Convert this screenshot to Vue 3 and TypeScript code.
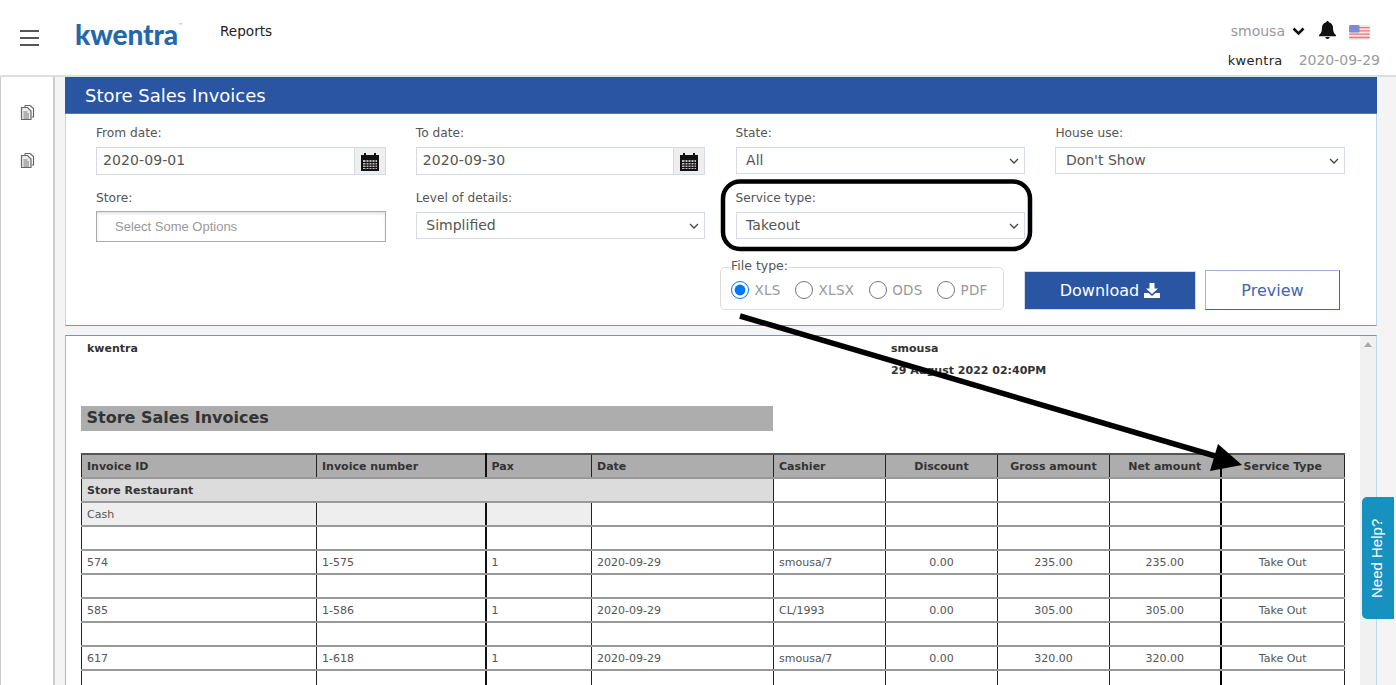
<script setup lang="ts">
interface Row { id: string; num: string; pax: string; date: string; cashier: string; disc: string; gross: string; net: string; type: string }
const rows: Row[] = [
  { id: '574', num: '1-575', pax: '1', date: '2020-09-29', cashier: 'smousa/7', disc: '0.00', gross: '235.00', net: '235.00', type: 'Take Out' },
  { id: '585', num: '1-586', pax: '1', date: '2020-09-29', cashier: 'CL/1993', disc: '0.00', gross: '305.00', net: '305.00', type: 'Take Out' },
  { id: '617', num: '1-618', pax: '1', date: '2020-09-29', cashier: 'smousa/7', disc: '0.00', gross: '320.00', net: '320.00', type: 'Take Out' }
]
const cols = [235, 169, 106, 182, 112, 112, 112, 111, 124]
const fileTypes = ['XLS', 'XLSX', 'ODS', 'PDF']
</script>

<template>
  <div class="page">
    <header class="top">
      <button class="burger" aria-label="Menu"><span></span><span></span><span></span></button>
      <div class="logo">kwentra<sup>™</sup></div>
      <div class="crumb">Reports</div>
      <div class="user">
        <div class="user-line">
          <span class="uname">smousa</span>
          <svg class="chev" width="13" height="9" viewBox="0 0 13 9"><path d="M1.5 1.5 6.5 6.5 11.5 1.5" fill="none" stroke="#111" stroke-width="2.6"/></svg>
          <svg class="bell" width="17" height="18" viewBox="0 0 17 18"><path d="M8.5 0c-.8 0-1.3.6-1.3 1.3C4.6 1.9 3 4 3 6.6c0 4.4-1.2 6-3 7.6v1h17v-1c-1.800-1.600-3-3.200-3-7.600 0-2.600-1.600-4.700-4.200-5.300C9.800.6 9.300 0 8.500 0zM6.300 16c.1 1.200 1 2 2.200 2s2.100-.8 2.200-2z" fill="#111"/></svg>
          <svg class="flag" width="21" height="15" viewBox="0 0 22 16">
            <rect width="22" height="16" rx="2" fill="#f6e6e6"/>
            <path d="M0 2h22v1.500H0zM0 5.500h22V7H0zM0 9h22v1.500H0zM0 12.500h22V14H0z" fill="#e2747c"/>
            <rect width="11" height="8" rx="1" fill="#7f8bcf"/>
          </svg>
        </div>
        <div class="user-line second">
          <span class="org">kwentra</span>
          <span class="today">2020-09-29</span>
        </div>
      </div>
    </header>

    <div class="body">
      <aside class="side">
        <svg v-for="n in 2" :key="n" class="doc" width="16" height="17" viewBox="0 0 16 17">
          <path d="M5 1.500h5l3.500 3v8.500H12M5 1.500V3" fill="none" stroke="#666" stroke-width="1.200"/>
          <path d="M1.500 3.500h6l3.500 3.500v8.500h-9.500z" fill="#ececec" stroke="#666" stroke-width="1.200"/>
          <path d="M3.500 8h4M3.500 10h5.500M3.500 12h5.500M3.500 14h5.500" stroke="#777" stroke-width="1"/>
        </svg>
      </aside>

      <main class="main">
        <section class="filters">
          <h1 class="title">Store Sales Invoices</h1>
          <div class="form">
            <div class="grid">
              <div class="field">
                <label>From date:</label>
                <div class="date">
                  <input value="2020-09-01" />
                  <span class="cal"><svg width="20" height="19" viewBox="0 0 20 19"><path d="M1 3h3V1h2v2h8V1h2v2h3v16H1z" fill="#111"/><path d="M3 8h14v9H3z" fill="#bbb"/><path d="M6 8v9M9 8v9M12 8v9M15 8v9M3 10.500h14M3 13h14M3 15.500h14" stroke="#111" stroke-width="1"/></svg></span>
                </div>
              </div>
              <div class="field">
                <label>To date:</label>
                <div class="date">
                  <input value="2020-09-30" />
                  <span class="cal"><svg width="20" height="19" viewBox="0 0 20 19"><path d="M1 3h3V1h2v2h8V1h2v2h3v16H1z" fill="#111"/><path d="M3 8h14v9H3z" fill="#bbb"/><path d="M6 8v9M9 8v9M12 8v9M15 8v9M3 10.500h14M3 13h14M3 15.500h14" stroke="#111" stroke-width="1"/></svg></span>
                </div>
              </div>
              <div class="field">
                <label>State:</label>
                <select><option>All</option></select>
              </div>
              <div class="field">
                <label>House use:</label>
                <select><option>Don't Show</option></select>
              </div>
              <div class="field">
                <label>Store:</label>
                <div class="chosen">Select Some Options</div>
              </div>
              <div class="field">
                <label>Level of details:</label>
                <select><option>Simplified</option></select>
              </div>
              <div class="field">
                <label>Service type:</label>
                <select><option>Takeout</option></select>
              </div>
            </div>
            <div class="actions">
              <fieldset class="files">
                <legend>File type:</legend>
                <label v-for="(f, i) in fileTypes" :key="f" class="radio">
                  <input type="radio" name="ft" :checked="i === 0" />
                  <span>{{ f }}</span>
                </label>
              </fieldset>
              <button class="btn primary">Download
                <svg width="16" height="15" viewBox="0 0 16 15"><path d="M5.500 0h5v5.500H14L8 11 2 5.500h3.500z" fill="#fff"/><path d="M0 10h4.500L8 13l3.500-3H16v5H0z" fill="#fff"/></svg>
              </button>
              <button class="btn ghost">Preview</button>
            </div>
          </div>
        </section>

        <section class="report">
          <div class="sheet">
            <div class="meta">
              <div class="meta-org">kwentra</div>
              <div class="meta-user">
                <div>smousa</div>
                <div class="stamp">29 August 2022 02:40PM</div>
              </div>
            </div>
            <h2 class="sheet-title">Store Sales Invoices</h2>
            <table>
              <colgroup><col v-for="(c, i) in cols" :key="i" :style="{ width: c + 'px' }" /></colgroup>
              <thead>
                <tr>
                  <th class="l">Invoice ID</th><th class="l heavy">Invoice number</th><th class="l">Pax</th><th class="l">Date</th><th class="l">Cashier</th>
                  <th>Discount</th><th>Gross amount</th><th class="black">Net amount</th><th>Service Type</th>
                </tr>
              </thead>
              <tbody>
                <tr>
                  <td colspan="4" class="l shade1"><b>Store Restaurant</b></td>
                  <td></td><td></td><td></td><td class="black"></td><td></td>
                </tr>
                <tr>
                  <td class="l shade2">Cash</td><td class="shade2 heavy"></td><td class="shade2"></td>
                  <td></td><td></td><td></td><td></td><td class="black"></td><td></td>
                </tr>
                <tr><td></td><td class="heavy"></td><td></td><td></td><td></td><td></td><td></td><td class="black"></td><td></td></tr>
                <template v-for="r in rows" :key="r.id">
                  <tr>
                    <td class="l">{{ r.id }}</td><td class="l heavy">{{ r.num }}</td><td class="l">{{ r.pax }}</td><td class="l">{{ r.date }}</td><td class="l">{{ r.cashier }}</td>
                    <td>{{ r.disc }}</td><td>{{ r.gross }}</td><td class="black">{{ r.net }}</td><td>{{ r.type }}</td>
                  </tr>
                  <tr><td></td><td class="heavy"></td><td></td><td></td><td></td><td></td><td></td><td class="black"></td><td></td></tr>
                </template>
              </tbody>
            </table>
          </div>
          <div class="scroll"><i></i></div>
        </section>
      </main>
    </div>

    <a class="help">Need Help?</a>

    <svg class="marks" width="1396" height="685" viewBox="0 0 1396 685">
      <rect x="723" y="181.500" width="307" height="67.500" rx="17" fill="none" stroke="#000" stroke-width="4.500"/>
      <path d="M740 316 1222 458" stroke="#000" stroke-width="5.500" fill="none"/>
      <path d="M1218 444 1242 465 1210 471z" fill="#000"/>
    </svg>
  </div>
</template>

<style>
html, body { margin: 0; padding: 0; overflow: hidden; background: #fff; }
</style>

<style scoped>
.page { position: relative; width: 1396px; height: 685px; overflow: hidden; display: flex; flex-direction: column; font-family: "DejaVu Sans", sans-serif; color: #444; background: #fff; }
.top { height: 75px; flex: none; display: flex; align-items: flex-start; border-bottom: 2px solid #dedede; }
.burger { width: 19px; margin: 30px 0 0 20px; padding: 0; border: 0; background: none; display: flex; flex-direction: column; gap: 5px; }
.burger span { display: block; height: 2px; background: #555; }
.logo { margin: 18px 0 0 36px; width: 145px; color: #2468ac; font: 900 28px/32px "Lato", sans-serif; letter-spacing: -.1px; }
.logo sup { font: 400 5px/5px "DejaVu Sans", sans-serif; vertical-align: 18px; color: #888; }
.crumb { margin-top: 22px; font-size: 13.600px; line-height: 18px; color: #222; }
.user { margin-left: auto; padding-right: 16px; display: flex; flex-direction: column; align-items: flex-end; }
.user-line { display: flex; align-items: center; }
.user-line:first-child { margin-top: 21px; padding-right: 10px; height: 20px; }
.uname { font-size: 14px; color: #9a9a9a; }
.chev { margin-left: 7px; }
.bell { margin-left: 14px; margin-top: -3px; }
.flag { margin-left: 13px; margin-top: 2px; }
.second { margin-top: 9px; height: 20px; }
.org { font-size: 13px; letter-spacing: .3px; color: #222; }
.today { font-size: 14px; color: #9a9a9a; margin-left: 16px; }

.body { flex: 1; min-height: 0; display: flex; }
.side { width: 52px; flex: none; border-left: 1px solid #ccc; border-right: 2px solid #ccc; display: flex; flex-direction: column; align-items: center; padding-top: 27px; gap: 31px; box-sizing: content-box; }
.doc { display: block; margin-left: 1px; }
.main { flex: 1; min-width: 0; background: #f4f4f4; padding: 0 19px 0 10px; display: flex; flex-direction: column; gap: 9px; }

.filters { height: 249px; flex: none; box-sizing: border-box; background: #fff; border-left: 1px solid #b9d9f0; border-right: 1px solid #b9d9f0; border-bottom: 1px solid #5b9bd5; display: flex; flex-direction: column; }
.title { margin: 0 -1px; height: 37px; flex: none; background: #2a55a3; color: #fff; font-weight: 400; font-size: 18px; line-height: 37px; padding-left: 20px; box-sizing: border-box; border-bottom: 1px solid #4a7cc8; }
.form { position: relative; flex: 1; padding: 11px 0 0 30px; }
.grid { display: grid; grid-template-columns: repeat(4, 289.500px); column-gap: 30.300px; row-gap: 0; }
.field { display: flex; flex-direction: column; height: 65px; }
.field label { font-size: 12.200px; line-height: 16px; color: #555; margin-bottom: 6px; }
.date { display: flex; height: 28px; box-sizing: border-box; border: 1px solid #d4dae6; }
.date input { flex: 1; min-width: 0; border: 0; outline: 0; padding: 0 6px 2px; font: 14px "DejaVu Sans", sans-serif; color: #555; letter-spacing: .1px; background: #fff; }
.cal { width: 30px; background: #eee; border-left: 1px solid #d4dae6; display: flex; align-items: center; justify-content: center; }
.field select { appearance: none; height: 27px; box-sizing: border-box; border: 1px solid #d4dae6; font: 14px "DejaVu Sans", sans-serif; color: #555; padding: 0 24px 2px 9.500px; border-radius: 0; background: #fff url("data:image/svg+xml,%3Csvg xmlns='http://www.w3.org/2000/svg' width='10' height='6'%3E%3Cpath d='M1 1l4 4 4-4' fill='none' stroke='%23444' stroke-width='1.300'/%3E%3C/svg%3E") no-repeat right 5px center; }
.chosen { height: 31px; margin-top: -1px; box-sizing: border-box; border: 1px solid #aaa; box-shadow: inset 0 2px 3px #e4e4e4; font: 13px/29px "Liberation Sans", sans-serif; color: #999; padding-left: 18px; }
.actions { position: absolute; bottom: 15px; right: 36px; display: flex; align-items: flex-end; }
.files { margin: 0 20px 0 0; padding: 0 0 5px 10px; height: 51px; width: 284px; box-sizing: border-box; border: 1px solid #dcdcdc; border-radius: 5px; display: flex; align-items: center; gap: 14.300px; }
.files legend { padding: 0 0 4px; font-size: 12.500px; line-height: 13px; color: #555; }
.radio { display: flex; align-items: center; gap: 5.500px; font-size: 13.500px; color: #999; letter-spacing: .3px; }
.radio input { width: 18px; height: 18px; margin: 0; }
.btn { height: 39px; box-sizing: border-box; font: 16px "DejaVu Sans", sans-serif; border-radius: 0; }
.primary { width: 172px; margin-right: 9px; background: #2a55a3; border: 1px solid #d5dce8; color: #fff; display: flex; align-items: center; justify-content: center; gap: 5px; }
.ghost { width: 135px; height: 40px; background: #fff; border: 1px solid #3f66ad; border-top-color: #9db5dd; border-left-color: #9db5dd; color: #3f66ad; }

.report { flex: 1; min-height: 0; display: flex; background: #fff; border-top: 1px solid #5b9bd5; border-left: 1px solid #8cc4ea; border-right: 1px solid #b9d9f0; overflow: hidden; }
.sheet { flex: 1; min-width: 0; padding-left: 15px; font-size: 11px; color: #555; }
.meta { display: flex; height: 70px; padding-top: 6px; box-sizing: border-box; font-weight: 700; color: #333; font-size: 11px; line-height: 14px; }
.meta-org { width: 804px; padding-left: 6px; }
.stamp { margin-top: 8px; }
.sheet-title { margin: 0; width: 692px; height: 25px; background: #adadad; color: #333; font-size: 16px; line-height: 24px; font-weight: 700; padding-left: 5.500px; box-sizing: border-box; }
table { margin-top: 22px; width: 1263px; table-layout: fixed; border-collapse: collapse; font-size: 11px; color: #555; }
th, td { height: 24px; padding: 0 5px; box-sizing: border-box; text-align: center; border-left: 1px solid #222; border-right: 1px solid #222; border-top: 2px solid #999; border-bottom: 2px solid #999; white-space: nowrap; }
th { background: #adadad; font-weight: 700; color: #333; border-top-color: #555; }
.heavy { border-right: 2px solid #111; }
.black { border-right: 2px solid #000; }
.l { text-align: left; }
.shade1 { background: #dcdcdc; color: #333; }
.shade2 { background: #eee; }
.scroll { width: 16px; flex: none; background: #f1f1f1; position: relative; }
.scroll i { position: absolute; left: 4px; top: 6px; border: 4px solid transparent; border-top: 0; border-bottom: 5px solid #aaa; }

.help { position: absolute; left: 1362px; top: 497px; width: 32px; height: 122px; box-sizing: border-box; padding-left: 3px; background: #1791c0; color: #fff; font: 15px "Liberation Sans", sans-serif; writing-mode: vertical-rl; transform: rotate(180deg); display: flex; align-items: center; justify-content: center; border-radius: 0 5px 5px 0; }
.marks { position: absolute; left: 0; top: 0; pointer-events: none; }
</style>
